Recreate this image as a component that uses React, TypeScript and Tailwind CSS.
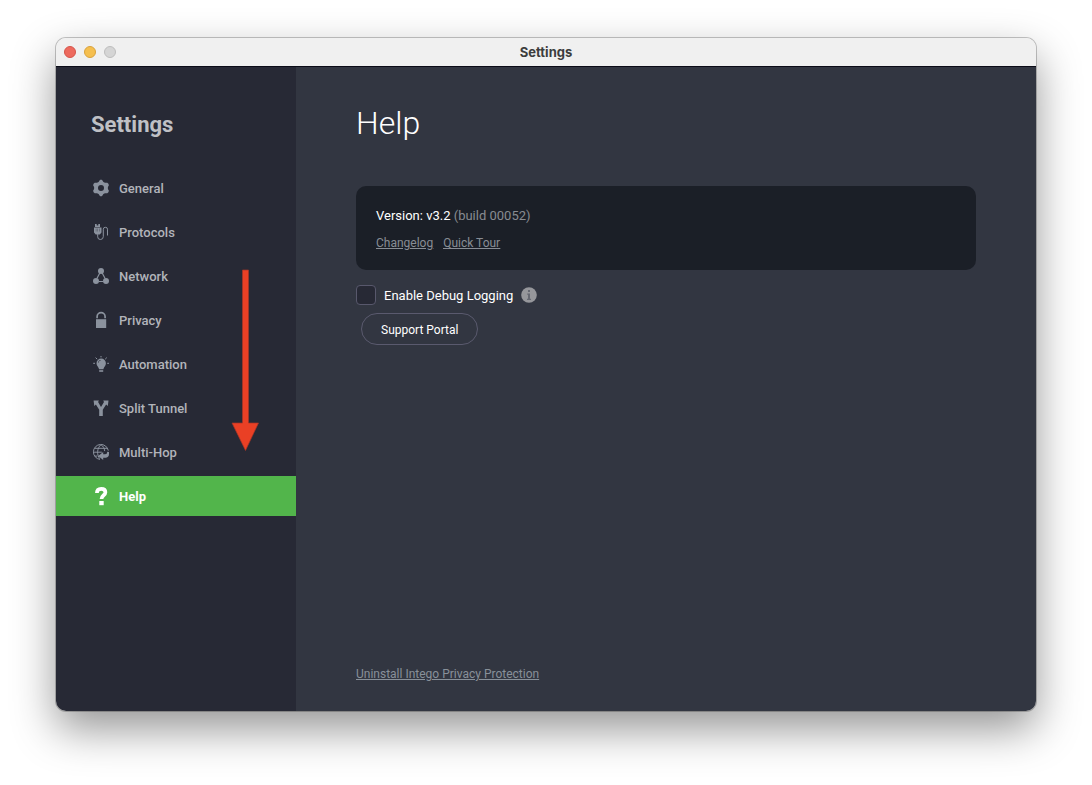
import { useState, type ReactNode } from "react";

function Icon({ children }: { children: ReactNode }) {
  return (
    <svg viewBox="0 0 16 16" className="size-4 shrink-0 overflow-visible" fill="currentColor" aria-hidden="true">
      {children}
    </svg>
  );
}

const GearIcon = () => (
  <Icon>
    <path
      fillRule="evenodd"
      d="M8-.4 9.300.2 10.400 1.900 12 2.700 14.300 2.700 15.400 3.700 15.900 5.200 14.900 7V9L15.900 10.800 15.400 12.300 14.300 13.300 12 13.300 10.400 14.100 9.300 15.800 8 16.400 6.700 15.800 5.600 14.100 4 13.300 1.700 13.300.6 12.300.1 10.800 1.100 9V7L.1 5.200.6 3.700 1.700 2.700 4 2.700 5.600 1.900 6.700.2ZM8 5a3 3 0 1 0 0 6 3 3 0 0 0 0-6Z"
    />
  </Icon>
);

const PlugIcon = () => (
  <Icon>
    <path d="M2 0h1.700v2H2zM5.300 0H7v2H5.300zM2 1.500h5v1.500H2z" />
    <path
      fillRule="evenodd"
      d="M1 3.400h7.500v5.200L6.800 10.600H2.700L1 8.600ZM2.900 4.600v3h.3v-3ZM4.600 4.600v3h.3v-3ZM6.300 4.600v3h.3v-3Z"
    />
    <path d="M4.700 10.200v2.600q0 2.700 2.700 2.700 2.900 0 2.900-2.900V5.200q0-1.900 2.100-1.900T14.500 5.200v6.300" fill="none" stroke="currentColor" />
  </Icon>
);

const NetworkIcon = () => (
  <Icon>
    <circle cx="8" cy="3" r="3" />
    <circle cx="3" cy="13" r="3" />
    <circle cx="13" cy="13" r="3" />
    <path d="M6.8 5 3.9 10.5M9.2 5l2.9 5.5M6 13.5h4" fill="none" stroke="currentColor" strokeWidth="1.2" />
  </Icon>
);

const LockIcon = () => (
  <Icon>
    <path d="M3 7.2h10.2V16H3z" />
    <path d="M4.1 6.2V4.7a4 4 0 0 1 8 0v1.5" fill="none" stroke="currentColor" strokeWidth="1.7" />
  </Icon>
);

const BulbIcon = () => (
  <Icon>
    <path
      fillRule="evenodd"
      d="M8.2 2.500a4.700 4.700 0 0 1 4.700 4.700c0 2.400-1.500 3.300-2.200 5L10.400 13.300H6.100L5.700 12.200C5.100 10.500 3.500 9.600 3.500 7.200A4.700 4.700 0 0 1 8.200 2.500ZM7.600 4C6 4.200 5.200 5.300 5.100 6.800L5.500 6.900C5.700 5.500 6.400 4.700 7.700 4.400Z"
    />
    <path d="M6.200 14.200h4v1.600h-4z" />
    <path d="M8 0v1.400M2.600 1.600l1.600 1.600M13.800 1.600l-1.600 1.600M.2 7.300h1.800M14.200 7.300H16" fill="none" stroke="currentColor" />
  </Icon>
);

const SplitIcon = () => (
  <Icon>
    <path d="M.6.6 5.900.4 5.100 2.100 8 7 11 2.100 10.200.4 15.500.6 14.800 6 13.100 4.600 9.800 9.800V16H6.200V9.800L2.900 4.600 1.300 6Z" />
  </Icon>
);

const GlobeIcon = () => (
  <Icon>
    <g fill="none" stroke="currentColor">
      <path d="M15.300 6.600A7.500 7.500 0 1 0 7 15.400" />
      <path d="M6.700 14.600C3.600 10.600 3.900 4.200 8 .7c2.200 1.500 3.500 3.700 3.700 6.400M2 4.300h12M.6 8.200h8.200M1.800 12.100h2.600" />
    </g>
    <path d="M5.200 12 10.200 7.900v2.300h1.900q2.100 0 2.200-2.500l1.700.3v2q0 3.200-3.100 3.800h-2.700V16Z" />
  </Icon>
);

const QuestionIcon = () => (
  <Icon>
    <path
      d="M3.900 5C3.900 2.100 5.400.8 8.200.8c2.700 0 4.200 1.300 4.200 3.400 0 3.200-3.900 2.900-3.900 6.900"
      fill="none"
      stroke="currentColor"
      strokeWidth="3.700"
    />
    <path d="M6.300 13h4.400v4.200H6.300z" />
  </Icon>
);

const sections = [
  { name: "General", icon: <GearIcon /> },
  { name: "Protocols", icon: <PlugIcon /> },
  { name: "Network", icon: <NetworkIcon /> },
  { name: "Privacy", icon: <LockIcon /> },
  { name: "Automation", icon: <BulbIcon /> },
  { name: "Split Tunnel", icon: <SplitIcon /> },
  { name: "Multi-Hop", icon: <GlobeIcon /> },
  { name: "Help", icon: <QuestionIcon /> },
];

function TitleBar() {
  return (
    <header className="grid h-[29px] shrink-0 grid-cols-[1fr_auto_1fr] items-center border-b border-[#0b0c18] bg-[#f0f0f0] px-2">
      <div className="flex gap-2">
        <button aria-label="Close" className="size-3 rounded-full border border-[#d5544a] bg-[#ed6a5e]" />
        <button aria-label="Minimize" className="size-3 rounded-full border border-[#d9a23c] bg-[#f5bf4f]" />
        <button aria-label="Zoom" disabled className="size-3 rounded-full border border-[#bdbdbd] bg-[#d5d5d5]" />
      </div>
      <span className="[font-family:Inter,'Liberation_Sans',sans-serif] text-[13px] leading-4 font-bold text-[#3d3d3d]">
        Settings
      </span>
    </header>
  );
}

export default function App() {
  const [active, setActive] = useState("Help");

  return (
    <div className="flex min-h-screen bg-white px-14 pt-[38px] pb-[74px] font-['Roboto',sans-serif]">
      <div className="flex flex-1 flex-col overflow-hidden rounded-[10px] shadow-[0_0_0_1px_rgba(0,0,0,0.22),0_18px_44px_rgba(0,0,0,0.42)]">
        <TitleBar />
        <div className="flex flex-1">
          <aside className="relative w-60 shrink-0 bg-[#272935] pt-[42px]">
            <h2 className="pl-[35px] text-[22px] leading-8 font-bold text-[#bfc0c5]">Settings</h2>
            <nav className="mt-[27px] flex flex-col gap-1">
              {sections.map(({ name, icon }) => (
                <button
                  key={name}
                  onClick={() => setActive(name)}
                  className={
                    name === active
                      ? "flex h-10 items-center gap-2.5 bg-[#52b54b] pl-[37px] text-[13px] leading-5 font-bold text-white"
                      : "flex h-10 items-center gap-2.5 pl-[37px] text-[13px] leading-5 font-medium text-[#8b929e]"
                  }
                >
                  {icon}
                  <span className={name === active ? "pt-px text-white" : "pt-px text-[#b2b4ba]"}>{name}</span>
                </button>
              ))}
            </nav>
            <svg
              viewBox="0 0 28 182"
              className="pointer-events-none absolute top-[202px] left-[175px] h-[182px] w-7"
              aria-hidden="true"
            >
              <path d="M11.500 1h6v153h10L14.500 181.500 1 154H11.500Z" fill="#ea4025" stroke="#a83526" strokeWidth=".7" />
            </svg>
          </aside>
          <main className="flex flex-1 flex-col items-start bg-[#323641] px-[60px] pt-9 pb-[27px] text-[13px] text-white">
            <h1 className="text-[32px] leading-10 font-light">Help</h1>
            <section className="mt-[43px] h-21 w-full rounded-[10px] bg-[#1b1f27] px-5 pt-5">
              <p className="leading-5">
                Version: v3.2 <span className="text-[#888b91]">(build 00052)</span>
              </p>
              <div className="mt-[7px] flex gap-2.5 text-[12px] leading-5 text-[#888d95] underline">
                <a href="#changelog">Changelog</a>
                <a href="#tour">Quick Tour</a>
              </div>
            </section>
            <div className="mt-[15px] flex h-5 items-center">
              <input
                id="debug"
                type="checkbox"
                className="size-5 appearance-none rounded-[4px] border border-[#58586c] bg-[#272935] checked:bg-[#52b54b]"
              />
              <label htmlFor="debug" className="pt-px pr-2 pl-2 leading-5">
                Enable Debug Logging
              </label>
              <svg viewBox="0 0 16 16" className="size-4" role="img" aria-label="More information">
                <circle cx="8" cy="8" r="7.800" fill="#96979b" />
                <path d="M7 3h2v2H7zM6.200 6.500H9v5.200h1V13H6v-1.300h1V7.800h-.8z" fill="#666972" />
              </svg>
            </div>
            <button className="mt-2 ml-[5px] h-8 rounded-full border border-[#5a5a6e] px-[19px] pt-px text-[12px]">
              Support Portal
            </button>
            <a href="#uninstall" className="mt-auto text-[12px] leading-5 text-[#889099] underline">
              Uninstall Intego Privacy Protection
            </a>
          </main>
        </div>
      </div>
    </div>
  );
}
